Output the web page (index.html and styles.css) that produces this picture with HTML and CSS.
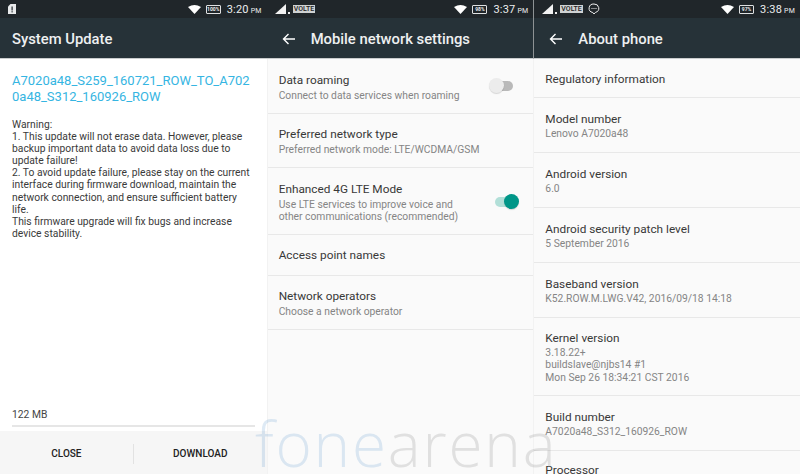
FILE: index.html
```html
<!DOCTYPE html>
<html lang="en">
<head>
    <meta http-equiv="Content-Type" content="text/html; charset=UTF-8">
    <meta name="viewport" content="width=device-width, initial-scale=1.0">
    <title>Phone settings</title>
    <link rel="stylesheet" href="styles.css">
</head>
<body>
    <div class="screens">
        <!-- System update -->
        <section class="screen screen-update">
            <div class="status-bar">
                <div class="status-left">
                    <svg class="sim-alert" width="8" height="10" viewBox="0 0 8 10"><path d="M2.500 0H8v10H0V2.500z" fill="#e8eaeb"/><rect x="3.500" y="2.500" width="1.200" height="4" fill="#23292d"/><rect x="3.500" y="7.200" width="1.200" height="1.200" fill="#23292d"/></svg>
                </div>
                <div class="status-right">
                    <svg class="wifi" width="13" height="9" viewBox="0 0 13 9"><path d="M0 2Q6.500-2 13 2L6.500 9z" fill="#fff"/></svg>
                    <span class="battery">100%</span>
                    <span class="clock">3:20<small>PM</small></span>
                </div>
            </div>
            <header class="toolbar"><h1>System Update</h1></header>
            <div class="update-body">
                <a class="update-name">A7020a48_S259_160721_ROW_TO_A7020a48_S312_160926_ROW</a>
                <p class="update-notes">Warning:<br>1. This update will not erase data. However, please backup important data to avoid data loss due to update failure!<br>2. To avoid update failure, please stay on the current interface during firmware download, maintain the network connection, and ensure sufficient battery life.<br>This firmware upgrade will fix bugs and increase device stability.</p>
                <div class="update-size">122 MB</div>
                <div class="progress"></div>
            </div>
            <div class="update-actions">
                <div class="action">CLOSE</div>
                <div class="action">DOWNLOAD</div>
            </div>
        </section>

        <!-- Mobile network settings -->
        <section class="screen">
            <div class="status-bar">
                <div class="status-left">
                    <svg width="11" height="10" viewBox="0 0 11 10"><path d="M11 0v10H0z" fill="#f2f2f2"/></svg>
                    <span class="dot"></span>
                    <span class="volte">VOLTE</span>
                </div>
                <div class="status-right">
                    <svg class="wifi" width="13" height="9" viewBox="0 0 13 9"><path d="M0 2Q6.500-2 13 2L6.500 9z" fill="#fff"/></svg>
                    <span class="battery">98%</span>
                    <span class="clock">3:37<small>PM</small></span>
                </div>
            </div>
            <header class="toolbar">
                <svg class="back" width="14" height="12" viewBox="0 0 14 12"><path d="M13 6H2M6.500 1 1.500 6l5 5" fill="none" stroke="#fff" stroke-width="1.400"/></svg>
                <h1>Mobile network settings</h1>
            </header>
            <div class="list list-network">
                <div class="row row-roaming">
                    <div class="row-text">
                        <div class="title">Data roaming</div>
                        <div class="sub">Connect to data services when roaming</div>
                    </div>
                    <div class="switch"><span class="track"></span><span class="thumb"></span></div>
                </div>
                <div class="row row-pref">
                    <div class="row-text">
                        <div class="title">Preferred network type</div>
                        <div class="sub">Preferred network mode: LTE/WCDMA/GSM</div>
                    </div>
                </div>
                <div class="row row-lte">
                    <div class="row-text">
                        <div class="title">Enhanced 4G LTE Mode</div>
                        <div class="sub">Use LTE services to improve voice and other communications (recommended)</div>
                    </div>
                    <div class="switch switch-on"><span class="track"></span><span class="thumb"></span></div>
                </div>
                <div class="row row-apn">
                    <div class="row-text"><div class="title">Access point names</div></div>
                </div>
                <div class="row row-ops">
                    <div class="row-text">
                        <div class="title">Network operators</div>
                        <div class="sub">Choose a network operator</div>
                    </div>
                </div>
            </div>
        </section>

        <!-- About phone -->
        <section class="screen screen-about">
            <div class="status-bar">
                <div class="status-left">
                    <svg width="11" height="10" viewBox="0 0 11 10"><path d="M11 0v10H0z" fill="#f2f2f2"/></svg>
                    <span class="dot"></span>
                    <span class="volte">VOLTE</span>
                    <svg class="chat" width="12" height="12" viewBox="0 0 12 12"><path d="M6 1a4.700 4.300 0 0 1 1.500 8.400L6 11 4.800 9.500A4.700 4.300 0 0 1 6 1z" fill="none" stroke="#eee" stroke-width="1"/><path d="M3.500 5.500h1M5.500 5.500h1M7.500 5.500h1" stroke="#eee" stroke-width="1"/></svg>
                </div>
                <div class="status-right">
                    <svg class="wifi" width="13" height="9" viewBox="0 0 13 9"><path d="M0 2Q6.500-2 13 2L6.500 9z" fill="#fff"/></svg>
                    <span class="battery">97%</span>
                    <span class="clock">3:38<small>PM</small></span>
                </div>
            </div>
            <header class="toolbar">
                <svg class="back" width="14" height="12" viewBox="0 0 14 12"><path d="M13 6H2M6.500 1 1.500 6l5 5" fill="none" stroke="#fff" stroke-width="1.400"/></svg>
                <h1>About phone</h1>
            </header>
            <div class="list list-about">
                <div class="row row-single"><div class="row-text"><div class="title">Regulatory information</div></div></div>
                <div class="row row-info"><div class="row-text"><div class="title">Model number</div><div class="sub">Lenovo A7020a48</div></div></div>
                <div class="row row-info"><div class="row-text"><div class="title">Android version</div><div class="sub">6.0</div></div></div>
                <div class="row row-info"><div class="row-text"><div class="title">Android security patch level</div><div class="sub">5 September 2016</div></div></div>
                <div class="row row-info"><div class="row-text"><div class="title">Baseband version</div><div class="sub">K52.ROW.M.LWG.V42, 2016/09/18 14:18</div></div></div>
                <div class="row row-kernel"><div class="row-text"><div class="title">Kernel version</div><div class="sub">3.18.22+<br>buildslave@njbs14 #1<br>Mon Sep 26 18:34:21 CST 2016</div></div></div>
                <div class="row row-info"><div class="row-text"><div class="title">Build number</div><div class="sub">A7020a48_S312_160926_ROW</div></div></div>
                <div class="row row-last"><div class="row-text"><div class="title">Processor</div></div></div>
            </div>
        </section>
    </div>

    <!-- Watermark over the screens -->
    <div class="watermark"><span class="mark-blue">fone</span><span class="mark-grey">arena</span></div>
</body>
</html>
```

FILE: styles.css
```css
body {
    margin: 0;
    height: 474px;
    overflow: hidden;
    position: relative;
    background-color: #fafafa;
    font-family: 'Roboto', 'Liberation Sans', sans-serif;
}
.screens {
    display: flex;
    height: 474px;
}
.screen {
    flex: 1 1 0;
    display: flex;
    flex-direction: column;
    min-width: 0;
    overflow: hidden;
    background-color: #fafafa;
}
.screen-update {
    background-color: #fff;
}
.screen-about .status-bar,
.screen-about .toolbar {
    border-left: 1px solid #8d9294;
}
/* Status bar */
.status-bar {
    height: 18px;
    flex: none;
    box-sizing: border-box;
    background-color: #20262a;
    display: flex;
    align-items: center;
    justify-content: space-between;
    padding: 0 5px 0 8px;
    color: #eceeef;
}
.status-left, .status-right {
    display: flex;
    align-items: center;
    gap: 3px;
}
.status-right {
    gap: 6px;
}
.wifi {
    margin-right: -1px;
}
.dot {
    width: 2px;
    height: 2px;
    margin-top: 7px;
    margin-left: -1px;
    background-color: #eee;
}
.volte {
    font-size: 7px;
    line-height: 8px;
    padding: 0 1px;
    font-weight: 500;
    color: #222;
    background-color: #cfd2d3;
}
.chat {
    margin-left: 2px;
}
.battery {
    font-size: 5px;
    line-height: 7px;
    width: 13px;
    text-align: center;
    border: 1px solid #dfe1e2;
    border-radius: 1px;
    font-weight: 700;
}
.clock {
    font-size: 11px;
    letter-spacing: 0.2px;
}
.clock small {
    font-size: 7px;
    margin-left: 2px;
}
/* Toolbar */
.toolbar {
    height: 41px;
    flex: none;
    background-color: #263238;
    display: flex;
    align-items: center;
    padding: 2px 12px 0;
    border-bottom: 1px solid #c9cccd;
    box-sizing: border-box;
}
.toolbar h1 {
    margin: 0;
    font-size: 14.800px;
    font-weight: 500;
    color: #eef0f1;
}
.back {
    margin-left: 3px;
    margin-right: 15px;
}
/* System update */
.update-body {
    flex: 1;
    padding: 14px 12px 0;
    display: flex;
    flex-direction: column;
}
.update-name {
    font-size: 13px;
    line-height: 16px;
    color: #35b5e2;
    word-break: break-all;
}
.update-notes {
    margin: 14px 0 0;
    font-size: 10.300px;
    line-height: 12.100px;
    color: #3a3a3a;
    flex: 1;
}
.update-size {
    font-size: 10.300px;
    color: #444;
}
.progress {
    height: 2px;
    margin-top: 4px;
    margin-bottom: 4px;
    background-color: #e6e6e6;
}
.update-actions {
    height: 43px;
    flex: none;
    display: flex;
    align-items: center;
    background-color: #f6f6f6;
    padding-top: 3px;
    box-sizing: border-box;
}
.action {
    flex: 1;
    text-align: center;
    font-size: 10px;
    font-weight: 500;
    color: #222;
    line-height: 20px;
}
.action + .action {
    border-left: 1px solid #e2e2e2;
}
/* Settings lists */
.list {
    flex: 1;
    border-left: 1px solid #f2f2f2;
}
.row {
    display: flex;
    align-items: center;
    justify-content: space-between;
    padding: 0 14px 0 11px;
    box-sizing: border-box;
    border-bottom: 1px solid #e8e8e8;
}
.title {
    font-size: 11.800px;
    line-height: 15px;
    color: #383838;
}
.sub {
    font-size: 10.300px;
    line-height: 12.500px;
    margin-top: 1px;
    color: #858585;
}
.list-network .sub {
    margin-top: 2px;
}
.row-roaming { height: 55px; padding-top: 3px; }
.row-pref { height: 54px; padding-top: 3px; }
.row-lte { height: 67px; padding-top: 3px; }
.row-apn { height: 41px; }
.row-ops { height: 54px; padding-top: 3px; }
.row-lte .row-text { width: 190px; }
.row-single { height: 39px; padding-top: 2px; }
.row-info { height: 55px; padding-top: 2px; }
.row-kernel { height: 78px; padding-top: 2px; }
.row-last {
    height: 38px;
    flex: none;
    border-bottom: none;
}
/* Switches */
.switch {
    position: relative;
    width: 24px;
    height: 16px;
    flex: none;
    margin-right: 6px;
    margin-top: -3px;
}
.track {
    position: absolute;
    left: 2px;
    top: 3px;
    width: 22px;
    height: 10px;
    border-radius: 5px;
    background-color: #b9b9b9;
}
.thumb {
    position: absolute;
    left: 0;
    top: 0;
    width: 15px;
    height: 15px;
    border-radius: 50%;
    background-color: #ececec;
    box-shadow: 0 1px 1px rgba(0, 0, 0, 0.15);
}
.switch-on {
    margin-right: 0;
    margin-top: -1px;
}
.switch-on .track {
    left: 0;
    width: 20px;
    background-color: #b2dfd8;
}
.switch-on .thumb {
    left: 9px;
    background-color: #009688;
}
/* Watermark */
.watermark {
    position: absolute;
    left: 255px;
    top: 412px;
    font-family: 'Open Sans', 'Liberation Sans', sans-serif;
    font-size: 62px;
    font-weight: 300;
    line-height: 62px;
    letter-spacing: 1.800px;
    white-space: nowrap;
    pointer-events: none;
}
.mark-blue {
    color: rgba(90, 150, 205, 0.2);
}
.mark-grey {
    color: rgba(120, 120, 120, 0.2);
}
```
